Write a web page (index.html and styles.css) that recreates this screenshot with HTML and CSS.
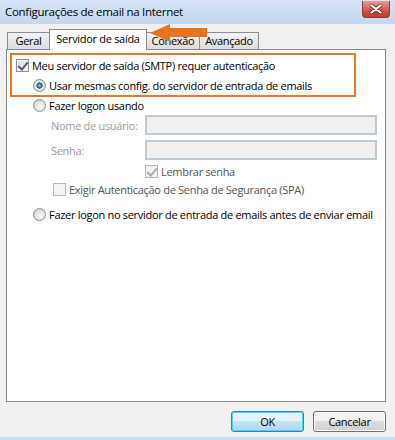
FILE: index.html
```html
<!DOCTYPE html>
<html lang="pt">
<head>
    <meta charset="UTF-8">
    <title>Configurações de email na Internet</title>
    <link rel="stylesheet" href="styles.css">
</head>
<body>
    <div class="window">
        <div class="titlebar">
            <span class="title">Configurações de email na Internet</span>
            <button class="close" aria-label="Fechar">
                <svg width="12" height="10" viewBox="0 0 12 10">
                    <path d="M1.5 1.5 L10.5 8.5 M10.5 1.5 L1.5 8.5" stroke="#6b2a24" stroke-width="3.6" stroke-linecap="round"/>
                    <path d="M1.5 1.5 L10.5 8.5 M10.5 1.5 L1.5 8.5" stroke="#fff" stroke-width="2.2" stroke-linecap="round"/>
                </svg>
            </button>
        </div>

        <div class="dialog">
            <div class="tabs">
                <div class="tab geral">Geral</div>
                <div class="tab active">Servidor de saída</div>
                <div class="tab conexao">Conexão</div>
                <div class="tab avancado">Avançado</div>
            </div>

            <div class="panel">
                <div class="highlight">
                    <div class="row">
                        <span class="check checked"></span>
                        <span>Meu servidor de saída (SMTP) requer autenticação</span>
                    </div>
                    <div class="row sub">
                        <span class="radio selected"></span>
                        <span>Usar mesmas config. do servidor de entrada de emails</span>
                    </div>
                </div>

                <div class="row opt logon">
                    <span class="radio"></span>
                    <span>Fazer logon usando</span>
                </div>

                <div class="field user">
                    <span class="label">Nome de usuário:</span>
                    <span class="input"></span>
                </div>
                <div class="field pass">
                    <span class="label">Senha:</span>
                    <span class="input"></span>
                </div>

                <div class="row remember">
                    <span class="check checked disabled"></span>
                    <span class="muted">Lembrar senha</span>
                </div>
                <div class="row spa">
                    <span class="check disabled"></span>
                    <span class="muted">Exigir Autenticação de Senha de Segurança (SPA)</span>
                </div>

                <div class="row opt before">
                    <span class="radio"></span>
                    <span>Fazer logon no servidor de entrada de emails antes de enviar email</span>
                </div>
            </div>

            <div class="buttons">
                <button class="btn default">OK</button>
                <button class="btn">Cancelar</button>
            </div>
        </div>

        <!-- orange pointer over the tab strip -->
        <svg class="arrow" width="58" height="18" viewBox="0 0 58 18">
            <polygon points="0,9 20,0 20,4 57,4 57,13 20,13 20,18" fill="#e8741f"/>
        </svg>
    </div>
</body>
</html>
```

FILE: styles.css
```css
* {
    box-sizing: border-box;
}

body {
    margin: 0;
    font-family: "Open Sans", "Noto Sans", sans-serif;
    font-size: 11px;
    letter-spacing: -0.3px;
    color: #000;
}

.window {
    position: relative;
    width: 395px;
    height: 440px;
    background-color: #f0f0f0;
    border-bottom: 3px solid #c9dbef;
    overflow: hidden;
}

.titlebar {
    height: 24px;
    display: flex;
    align-items: center;
    justify-content: space-between;
    padding: 0 5px 2px 5px;
    background: linear-gradient(#d5e4f5, #c3d8ef);
}

.title {
    font-size: 11.5px;
}

.close {
    width: 28px;
    height: 17px;
    margin-top: -4px;
    padding: 0;
    display: flex;
    align-items: center;
    justify-content: center;
    border: 1px solid #8c3b33;
    border-top: none;
    border-radius: 0 0 4px 4px;
    background: linear-gradient(#e4a097, #cf5a4c 55%, #c0392c);
}

.dialog {
    padding: 5px 9px 0 6px;
}

.tabs {
    display: flex;
    align-items: flex-end;
    height: 20px;
    padding-left: 1px;
    position: relative;
    z-index: 1;
}

.tab {
    height: 17px;
    border: 1px solid #898c95;
    border-bottom: none;
    margin-right: -1px;
    background: linear-gradient(#f2f2f2, #dcdcdc);
    line-height: 16px;
    text-align: center;
}

.geral {
    width: 43px;
}

.tab.active {
    width: 98px;
    height: 21px;
    margin-bottom: -1px;
    background: #fff;
    line-height: 18px;
}

.conexao {
    width: 54px;
}

.avancado {
    width: 60px;
}

.panel {
    height: 353px;
    border: 1px solid #898c95;
    background: #fff;
    padding: 3px 0 0 3px;
}

.highlight {
    width: 346px;
    height: 44px;
    border: 2px solid #e07a2c;
    padding-left: 4px;
}

.row {
    display: flex;
    align-items: center;
    gap: 3px;
    height: 20px;
    white-space: nowrap;
}

.row.sub {
    padding-left: 17px;
}

.opt {
    padding-left: 23px;
    height: 17px;
}

.before {
    margin-top: 9px;
}

.field {
    display: flex;
    align-items: center;
    padding-left: 41px;
}

.field.user {
    margin-top: 1px;
}

.field.pass {
    margin-top: 5px;
}

.label {
    width: 94px;
    color: #9d9d9d;
}

.input {
    width: 232px;
    height: 20px;
    border: 2px solid #bccad6;
    background: #f0f0f0;
}

.remember {
    padding-left: 135px;
    height: 16px;
    margin-top: 3px;
}

.spa {
    padding-left: 43px;
    height: 16px;
    margin-top: 2px;
}

.muted {
    color: #555;
}

.check {
    position: relative;
    width: 13px;
    height: 13px;
    flex: none;
    border: 1px solid #8e8f8f;
    background: linear-gradient(135deg, #dcdcdc, #fbfbfb);
    box-shadow: inset 0 0 0 1px #f4f4f4;
}

.check.checked::after {
    content: "";
    position: absolute;
    left: 3px;
    top: 0;
    width: 4px;
    height: 8px;
    border: solid #4b5c8f;
    border-width: 0 2px 2px 0;
    transform: rotate(40deg);
}

.check.disabled {
    border-color: #b6b6b6;
    background: #f4f4f4;
}

.check.disabled.checked::after {
    border-color: #a9a9a9;
}

.radio {
    width: 13px;
    height: 13px;
    flex: none;
    border-radius: 50%;
    border: 1px solid #8f8f8f;
    background: radial-gradient(circle at 60% 65%, #fafafa, #d8d8d8 70%);
}

.radio.selected {
    background: radial-gradient(circle at 50% 50%, #7fc1ea 0, #1f6bb0 30%, #1a5a96 38%, #eaeaea 42%, #dadada 70%);
}

.buttons {
    display: flex;
    justify-content: flex-end;
    gap: 9px;
    margin-top: 9px;
}

.btn {
    width: 73px;
    height: 21px;
    padding: 0;
    font-family: inherit;
    font-size: 11px;
    letter-spacing: inherit;
    color: #000;
    border: 1px solid #707070;
    border-radius: 3px;
    background: linear-gradient(#f2f2f2 50%, #dddddd 50%, #cfcfcf);
    box-shadow: inset 0 0 0 1px #fcfcfc;
}

.btn.default {
    border-color: #3c7fb1;
    background: linear-gradient(#e5f4fc 50%, #c4e5f6 50%, #a9d9f2);
    box-shadow: inset 0 0 0 1px #48d3fb;
}

.arrow {
    position: absolute;
    left: 150px;
    top: 24px;
    z-index: 2;
}
```
